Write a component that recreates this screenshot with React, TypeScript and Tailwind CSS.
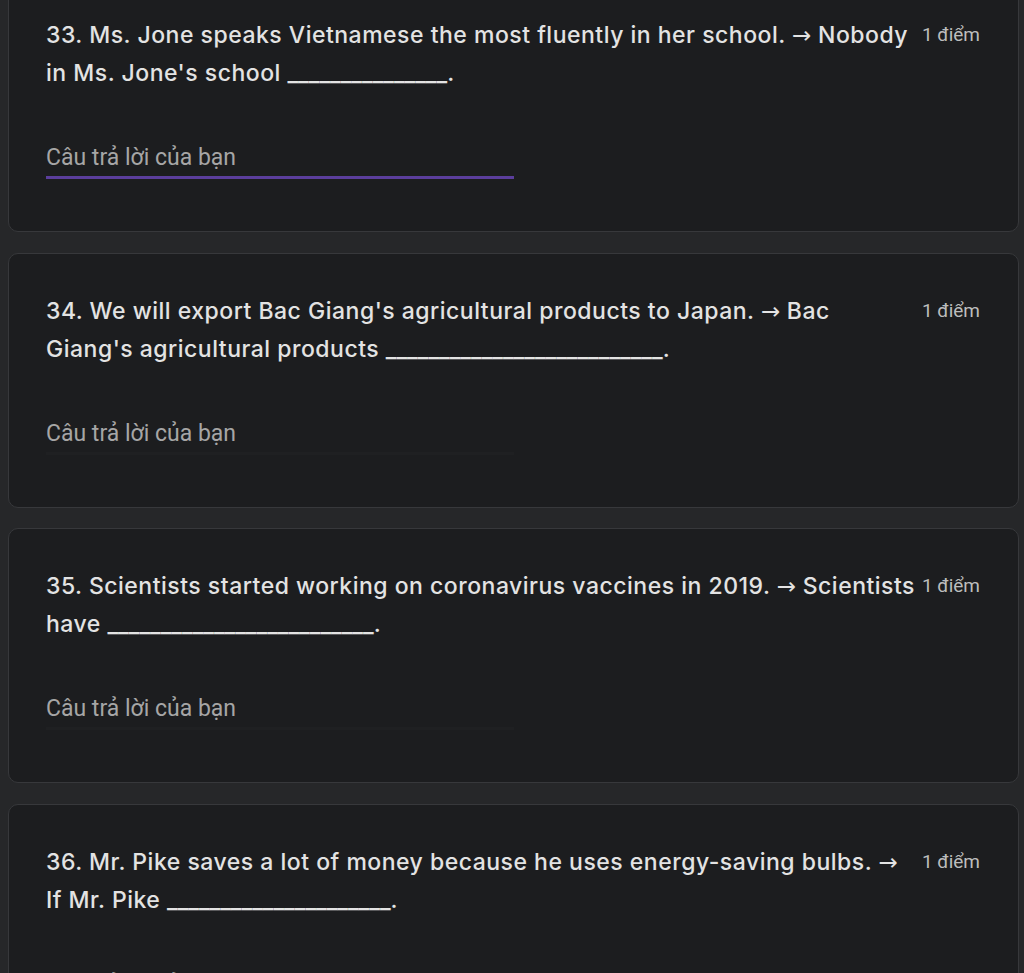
import React from "react";

type Q = { n: number; a: string; b: string; blank: string; focused?: boolean };

const questions: Q[] = [
  { n: 33, a: "33. Ms. Jone speaks Vietnamese the most fluently in her school. ", b: " Nobody in Ms. Jone's school ", blank: "_______________", focused: true },
  { n: 34, a: "34. We will export Bac Giang's agricultural products to Japan. ", b: " Bac Giang's agricultural products ", blank: "__________________________" },
  { n: 35, a: "35. Scientists started working on coronavirus vaccines in 2019. ", b: " Scientists have ", blank: "_________________________" },
  { n: 36, a: "36. Mr. Pike saves a lot of money because he uses energy-saving bulbs. ", b: " If Mr. Pike ", blank: "_____________________" },
];

function Card({ q }: { q: Q }) {
  return (
    <div className="h-[255px] shrink-0 rounded-[10px] border border-[#37383b] bg-[#1c1d1f] pl-[37px] pr-[38px] pt-[38px]">
      <div className="flex items-start justify-between">
        <div
          className="w-[872px] text-[23px] font-medium leading-[38px] tracking-[0.5px] text-[#e3e3e3]"
          style={{ fontFamily: "Inter, 'Open Sans', sans-serif" }}
        >
          {q.a}
          <span style={{ fontFamily: "'DejaVu Sans', sans-serif" }} className="font-normal tracking-[0px]">
            →
          </span>
          {q.b}
          <span className="tracking-[0px]">{q.blank}</span>.
        </div>
        <div
          className="text-[19px] leading-[38px] text-[#bdbdbd]"
          style={{ fontFamily: "Roboto, 'Liberation Sans', sans-serif" }}
        >
          1 điểm
        </div>
      </div>
      <div
        className={
          "mt-[48px] w-[468px] border-b-[3px] " +
          (q.focused ? "border-[#5b3e9c]" : "border-[#1f2022]")
        }
      >
        <div
          className="text-[23px] leading-[36px] text-[#a6a6a6]"
          style={{ fontFamily: "Roboto, 'Liberation Sans', sans-serif" }}
        >
          Câu trả lời của bạn
        </div>
      </div>
    </div>
  );
}

export default function App() {
  return (
    <div className="h-[973px] w-[1024px] overflow-hidden bg-[#262729]">
      <div className="-mt-[23px] flex flex-col gap-[20.5px] pl-[8px] pr-[5px]">
        {questions.map((q) => (
          <Card key={q.n} q={q} />
        ))}
      </div>
    </div>
  );
}
